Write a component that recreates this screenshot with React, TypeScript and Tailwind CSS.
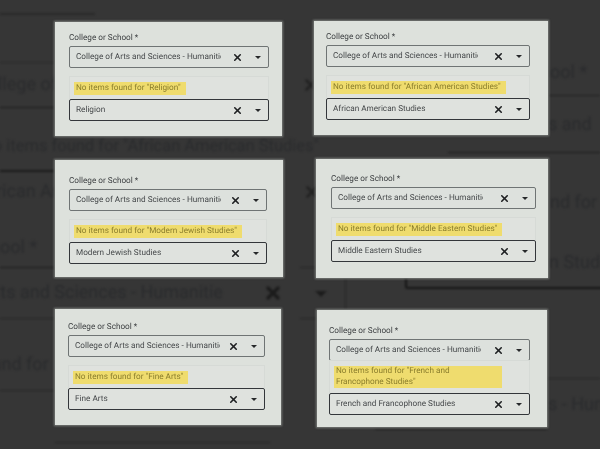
import { X } from 'lucide-react';

const font = "font-['Roboto',sans-serif] [text-rendering:geometricPrecision]";

type Card = {
  box: string;
  query: string;
  pad: string;
  wrap?: boolean;
};

const cards: Card[] = [
  { box: 'mt-px w-[227px] h-[114px]', query: 'Religion', pad: 'pl-[14px] pr-[13px] pt-[9px]' },
  { box: 'w-[234px] h-[114px]', query: 'African American Studies', pad: 'pl-[12px] pr-[18px] pt-[9px]' },
  { box: 'mt-px w-[228px] h-[117px]', query: 'Modern Jewish Studies', pad: 'pl-[14px] pr-[16px] pt-[14px]' },
  { box: 'ml-[2px] w-[232px] h-[119px]', query: 'Middle Eastern Studies', pad: 'pl-[15px] pr-[12px] pt-[13px]' },
  { box: 'w-[226px] h-[116px]', query: 'Fine Arts', pad: 'pl-[13px] pr-[16px] pt-[11px]' },
  { box: 'mt-px ml-[3px] w-[230px] h-[117px]', query: 'French and Francophone Studies', pad: 'pl-[12px] pr-[17px] pt-[14px]', wrap: true },
];

function Field({ text, active }: { text: string; active?: boolean }) {
  return (
    <div
      className={`flex h-[22px] items-center rounded-[2px] border pl-[6px] pr-[7px] ${
        active ? 'border-[#33363a] bg-[#dfe2de]' : 'border-[#6f7474] bg-[#dde1dd]'
      }`}
    >
      <span className="w-[145px] overflow-hidden whitespace-nowrap text-[8.2px] text-[#45484a]">{text}</span>
      <X className="ml-auto h-[11px] w-[11px] text-[#1e2022]" strokeWidth={3.5} />
      <span className="ml-[12px] h-0 w-0 border-x-[3px] border-t-[3px] border-x-transparent border-t-[#26282a]" />
    </div>
  );
}

function SearchCard({ card }: { card: Card }) {
  return (
    <div className={`${card.box} ${card.pad} bg-[#dde1dc] shadow-[0_0_2px_1px_#7c7f7c] ${font}`}>
      <div className="mb-px text-[8.2px] leading-[14px] text-[#3e4143]">College or School *</div>
      <Field text="College of Arts and Sciences - Humanities" />
      <div
        className={`${
          card.wrap ? '-mt-px pt-[5px] pb-[5px]' : 'mt-[8px] pt-[5px] pb-[4px]'
        } border-x border-t border-[#d6dad6] bg-[#dfe2de] pl-[4px] pr-[4px]`}
      >
        <div
          className={`${
            card.wrap ? 'w-[168px] pr-[3px] leading-[11px]' : 'w-fit pr-[5px] leading-[13px]'
          } bg-[#efdc6e] pl-[2px] text-[8.2px] text-[#8a7d2c]`}
        >
          No items found for "{card.query}"
        </div>
      </div>
      <Field text={card.query} active />
    </div>
  );
}

// blurred enlarged page behind the cards
const backdropText = [
  { t: 'College of', c: 'left-[-24px] top-[73px] text-[18px]' },
  { t: 'No items found for "African American Studies"', c: 'left-[-19px] top-[135px] text-[16.5px]' },
  { t: 'African Am', c: 'left-[-22px] top-[180px] text-[18px]' },
  { t: 'School *', c: 'left-[-30px] top-[236px] text-[18px]' },
  { t: 'Arts and Sciences - Humanitie', c: 'left-[-18px] top-[281px] text-[18px]' },
  { t: 'found for', c: 'left-[-25px] top-[353px] text-[18px]' },
  { t: 'School *', c: 'left-[520px] top-[61px] text-[18px]' },
  { t: 's and', c: 'left-[548px] top-[113px] text-[18px]' },
  { t: 'nd for', c: 'left-[550px] top-[191px] text-[18px]' },
  { t: 'n Studies', c: 'left-[549px] top-[251px] text-[18px]' },
  { t: 's - Humanities', c: 'left-[548px] top-[393px] text-[18px]' },
];

const backdropLines = [
  'left-0 top-[13px] w-[95px] h-[2px] bg-[#2a2a2a]',
  'left-0 top-[62px] w-[55px] h-px bg-[#2a2a2a]',
  'left-0 top-[107px] w-[55px] h-px bg-[#1c1c1c]',
  'left-0 top-[170px] w-[55px] h-[2px] bg-[#1c1c1c]',
  'left-0 top-[267px] w-[55px] h-px bg-[#1c1c1c]',
  'left-0 top-[318px] w-[55px] h-px bg-[#262626]',
  'left-0 top-[390px] w-[55px] h-px bg-[#262626]',
  'left-[55px] top-[442px] w-[215px] h-px bg-[#262626]',
  'left-[548px] top-[95px] w-[52px] h-px bg-[#222222]',
  'left-[448px] top-[152px] w-[152px] h-px bg-[#1c1c1c]',
  'left-[300px] top-[267px] w-[16px] h-px bg-[#262626]',
  'left-[300px] top-[318px] w-[17px] h-px bg-[#262626]',
  'left-[345px] top-[278px] w-px h-[31px] bg-[#262626]',
  'left-[547px] top-[378px] w-[53px] h-px bg-[#262626]',
  'left-[375px] top-[429px] w-[172px] h-px bg-[#222222]',
];

export default function App() {
  return (
    <div className="relative h-[449px] w-[600px] overflow-hidden bg-[#363636]">
      <div className={`absolute inset-0 blur-[1.2px] ${font}`}>
        {backdropText.map((b) => (
          <span key={b.t} className={`absolute ${b.c} whitespace-nowrap leading-[24px] text-[#2a2b2d]`}>
            {b.t}
          </span>
        ))}
        {backdropLines.map((l) => (
          <div key={l} className={`absolute ${l}`} />
        ))}
        <div className="absolute left-[405px] top-[270px] h-[19px] w-[220px] rounded-bl-[3px] border-b-2 border-l-2 border-[#161616]" />
        <X className="absolute left-[263px] top-[283px] h-[20px] w-[20px] text-[#1c1c1c]" strokeWidth={4} />
        <X className="absolute left-[302px] top-[76px] h-[18px] w-[18px] text-[#222222]" strokeWidth={3.5} />
        <X className="absolute left-[303px] top-[183px] h-[18px] w-[18px] text-[#222222]" strokeWidth={3.5} />
        <span className="absolute left-[315px] top-[291px] h-0 w-0 border-x-[6px] border-t-[6px] border-x-transparent border-t-[#1c1c1c]" />
      </div>
      <div className="relative grid grid-cols-[228px_234px] grid-rows-[138px_150px_auto] gap-x-[31px] pl-[55px] pt-[21px]">
        {cards.map((c) => (
          <SearchCard key={c.query} card={c} />
        ))}
      </div>
    </div>
  );
}
